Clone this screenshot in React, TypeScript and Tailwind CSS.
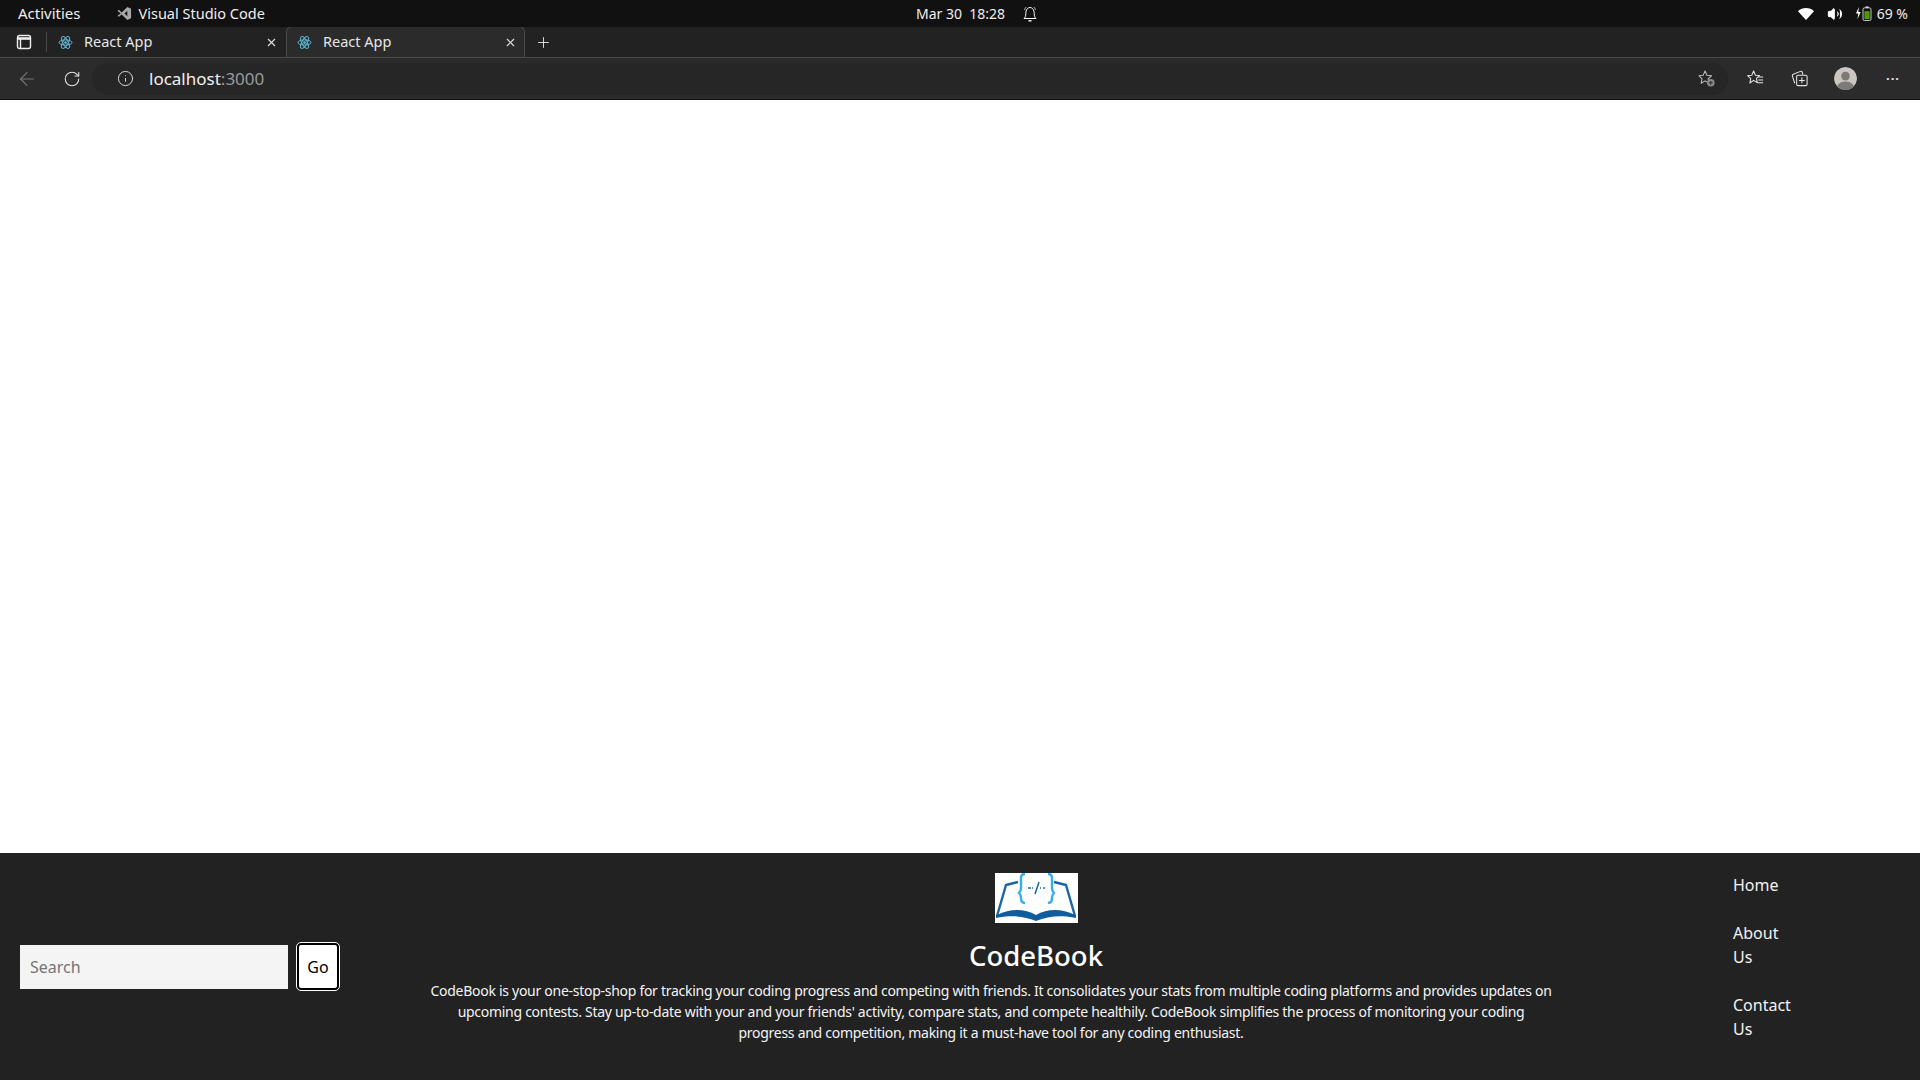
import { RotateCw, ArrowLeft, Info, X, Plus, Volume2 } from "lucide-react";

const uiFont = "font-['Noto_Sans','Open_Sans',sans-serif]";

function ReactIcon() {
  return (
    <svg viewBox="0 0 24 24" className="h-[15px] w-[15px]" fill="none" stroke="#61b8d6" strokeWidth="1.6" aria-hidden>
      <circle cx="12" cy="12" r="2.2" fill="#61b8d6" stroke="none" />
      <ellipse cx="12" cy="12" rx="10.5" ry="4.2" />
      <ellipse cx="12" cy="12" rx="10.5" ry="4.2" transform="rotate(60 12 12)" />
      <ellipse cx="12" cy="12" rx="10.5" ry="4.2" transform="rotate(120 12 12)" />
    </svg>
  );
}

function Tab({ active }: { active?: boolean }) {
  return (
    <div
      className={`flex h-[31px] w-[239px] items-center justify-between rounded-t-md border border-b-0 pl-[10px] pr-[7px] ${
        active ? "border-[#4a4a4a] bg-[#2b2b2b]" : "border-transparent"
      }`}
    >
      <div className="flex items-center gap-[11px]">
        <ReactIcon />
        <span className="text-[14.5px] text-[#e6e6e6]">React App</span>
      </div>
      <X className="h-[13px] w-[13px] text-[#e0e0e0]" strokeWidth={2} />
    </div>
  );
}

function SidebarIcon() {
  return (
    <svg viewBox="0 0 16 16" className="h-[16px] w-[16px]" fill="none" stroke="#eeeeee" strokeWidth="1.4" aria-hidden>
      <rect x="1.500" y="1.500" width="13" height="13" rx="2" />
      <path d="M1.500 4.500h13" strokeWidth="2.600" />
      <path d="M4.500 5v9" />
    </svg>
  );
}

function VsCodeIcon() {
  return (
    <svg viewBox="0 0 16 16" className="h-[15px] w-[15px]" fill="#a8a8a8" aria-hidden>
      <path d="M11 1l4 2v10l-4 2-6-6-3 2.500-1.500-1L4 8 .500 5l1.500-1L5 7zM11 5L8 8l3 3z" />
    </svg>
  );
}

function FavAddIcon() {
  return (
    <svg viewBox="0 0 20 20" className="h-[19px] w-[19px]" fill="none" aria-hidden>
      <path d="M8.500 2l2 4.600 4.800.5-3.600 3.200 1 4.700-4.200-2.500-4.200 2.500 1-4.700L2 7.100l4.500-.5z" stroke="#bdbdbd" strokeWidth="1.100" strokeLinejoin="round" />
      <circle cx="14.500" cy="14.500" r="4" fill="#8a8a8a" />
      <path d="M12.500 14.500h4M14.500 12.500v4" stroke="#2b2b2b" strokeWidth="1.100" />
    </svg>
  );
}

function FavListIcon() {
  return (
    <svg viewBox="0 0 20 20" className="h-[19px] w-[19px]" fill="none" stroke="#e6e6e6" strokeWidth="1.100" aria-hidden>
      <path d="M8 2l1.900 4.500 4.300.4-3.200 2.900.9 4.500L8 12l-3.900 2.700.9-4.500L1.800 6.900l4.300-.4z" strokeLinejoin="round" />
      <path d="M13 8.500h5M13 11.500h5M12 14.500h6" />
    </svg>
  );
}

function CollectionsIcon() {
  return (
    <svg viewBox="0 0 20 20" className="h-[19px] w-[19px]" fill="none" stroke="#e6e6e6" strokeWidth="1.100" aria-hidden>
      <path d="M5 15L2.500 7.500a1.500 1.500 0 0 1 1-1.900L11 2.500a1.500 1.500 0 0 1 1.900.9L13.500 6" />
      <rect x="7" y="6.500" width="11" height="11" rx="1.500" />
      <path d="M12.500 9v6M9.500 12h6" />
    </svg>
  );
}

function AvatarIcon() {
  return (
    <svg viewBox="0 0 24 24" className="h-[23px] w-[23px] rounded-full" aria-hidden>
      <circle cx="12" cy="12" r="12" fill="#c9c6c1" />
      <circle cx="12" cy="9.500" r="4.500" fill="#7d7b78" />
      <path d="M2.500 24c0-6 4-9 9.500-9s9.500 3 9.500 9z" fill="#7d7b78" />
    </svg>
  );
}

function WifiIcon() {
  return (
    <svg viewBox="0 0 16 12" className="h-[12px] w-[16px]" fill="#ffffff" aria-hidden>
      <path d="M8 12L0 3.200C2 1.200 4.900 0 8 0s6 1.200 8 3.200z" />
    </svg>
  );
}

function BatteryIcon() {
  return (
    <svg viewBox="0 0 18 16" className="h-[15px] w-[17px]" fill="none" aria-hidden>
      <path d="M4 1L1 8h2.500L2.500 14 6 6.500H3.500z" fill="#ffffff" />
      <rect x="8.500" y="2" width="8.500" height="13.500" rx="1.500" stroke="#e8e8e8" strokeWidth="0.900" />
      <rect x="11" y="0.500" width="3.500" height="1.500" fill="#e8e8e8" />
      <rect x="10" y="5.500" width="5.500" height="8.500" fill="#4e9a06" />
    </svg>
  );
}

function BellIcon() {
  return (
    <svg viewBox="0 0 14 16" className="h-[16px] w-[14px]" fill="none" stroke="#ffffff" strokeWidth="1" aria-hidden>
      <path d="M1 12.500c1.200-1 1.800-2.500 1.800-5C2.800 4 4.500 1.500 7 1.500s4.200 2.500 4.200 6c0 2.500.6 4 1.800 5z" strokeLinejoin="round" />
      <path d="M5.500 14.800h3" strokeWidth="1.400" />
      <path d="M1.500 4C1.800 2.800 2.400 1.800 3.200 1M12.500 4c-.3-1.200-.9-2.200-1.700-3" strokeWidth="0.700" />
    </svg>
  );
}

function LogoIcon() {
  return (
    <svg viewBox="0 0 83 50" className="block h-[50px] w-[83px] bg-white" fill="none" aria-hidden>
      <path d="M23 9L11 12 2 43c14-4 28-3 39 3 11-6 25-7 39-3L71 12 59 9" stroke="#1b65a6" strokeWidth="2.400" strokeLinejoin="round" />
      <path d="M2 42c14-7 28-6 39 0 11-6 25-7 39 0l1 3c-14-3-28-2-40 3-12-5-26-6-40-3z" fill="#0f5c9e" />
      <path d="M30 1c-3 0-4 1-4 4v10c0 3-1 4-2 5 1 1 2 2 2 5v0c0 3 1 5 4 5" stroke="#35aef0" strokeWidth="2.400" />
      <path d="M53 1c3 0 4 1 4 4v10c0 3 1 4 2 5-1 1-2 2-2 5v0c0 3-1 5-4 5" stroke="#35aef0" strokeWidth="2.400" />
      <path d="M33 15h3M37 15h1M45 15h1M48 15h2M44 9l-4 12" stroke="#1b65a6" strokeWidth="1.500" />
    </svg>
  );
}

export default function App() {
  return (
    <div className={`flex h-[1080px] w-[1920px] flex-col overflow-hidden bg-white ${uiFont}`}>
      {/* system bar */}
      <div className="relative flex h-[27px] items-center justify-between bg-[#111111] pl-[18px] pr-[12px] text-[15px] text-[#eeeeee]">
        <div className="flex items-center">
          <span>Activities</span>
          <span className="ml-[36px] flex items-center gap-[7px] text-[14.5px]">
            <VsCodeIcon />
            Visual Studio Code
          </span>
        </div>
        <div className="absolute left-[916px] top-0 flex h-[27px] items-center gap-[18px] text-[14px]">
          <span className="whitespace-pre">Mar 30  18:28</span>
          <BellIcon />
        </div>
        <div className="flex items-center gap-[11px]">
          <WifiIcon />
          <Volume2 className="ml-[2px] h-[16px] w-[16px] fill-white text-white" strokeWidth={1.500} />
          <span className="ml-[1px] flex items-center gap-[5px] text-[14px]">
            <BatteryIcon />
            69 %
          </span>
        </div>
      </div>

      {/* tab strip */}
      <div className="flex h-[31px] items-end border-b border-[#4a4a4a] bg-[#222222]">
        <div className="flex h-[31px] w-[47px] items-center justify-between pl-[16px]">
          <SidebarIcon />
          <span className="h-[20px] w-px bg-[#4a4a4a]" />
        </div>
        <Tab />
        <Tab active />
        <Plus className="mb-[6px] ml-[10px] h-[17px] w-[17px] text-[#e6e6e6]" strokeWidth={1.300} />
      </div>

      {/* address bar */}
      <div className="flex h-[42px] items-center justify-between border-b border-[#111111] bg-[#2b2b2b] pl-[16px] pr-[20px]">
        <div className="flex items-center">
          <ArrowLeft className="h-[22px] w-[22px] text-[#777777]" strokeWidth={1.200} />
          <RotateCw className="ml-[25px] h-[18px] w-[18px] text-[#e6e6e6]" strokeWidth={1.400} />
          <div className="ml-[11px] flex h-[32px] w-[1636px] items-center justify-between rounded-full bg-[#262626] pl-[25px] pr-[12px]">
            <div className="flex items-center">
              <Info className="h-[17px] w-[17px] text-[#e6e6e6]" strokeWidth={1.300} />
              <span className="ml-[15px] text-[17px] text-[#f0f0f0]">
                localhost<span className="text-[#9a9a9a]">:3000</span>
              </span>
            </div>
            <FavAddIcon />
          </div>
        </div>
        <div className="flex items-center">
          <FavListIcon />
          <span className="ml-[25px]"><CollectionsIcon /></span>
          <span className="ml-[25px]"><AvatarIcon /></span>
          <span className="ml-[29px] text-[13px] font-bold leading-none tracking-[1px] text-[#e6e6e6]">···</span>
        </div>
      </div>

      <div className="flex-1 bg-white" />

      {/* footer */}
      <footer className="flex h-[227px] items-center bg-[#222222] text-white">
        <form className="flex w-[375px] items-center pl-[20px]">
          <input
            placeholder="Search"
            className="h-[44px] w-[268px] bg-[#f4f4f4] px-[10px] text-[16px] text-black outline-none placeholder:text-[#757575]"
          />
          <button
            type="button"
            className="ml-[9px] h-[47px] w-[42px] rounded-[4px] border-2 border-black bg-white text-[16px] text-black outline outline-1 outline-white"
          >
            Go
          </button>
        </form>

        <div className="flex w-[1322px] flex-col items-center self-start pt-[20px]">
          <LogoIcon />
          <h1 className="mt-[16px] text-[27.5px] font-medium leading-[34px]">CodeBook</h1>
          <p className="-ml-[90px] mt-[7px] w-[1140px] text-center text-[14px] leading-[21px] tracking-[-0.28px] text-[#f4f4f4]">
            CodeBook is your one-stop-shop for tracking your coding progress and competing with friends. It consolidates your stats from multiple coding platforms and provides updates on
            <br />
            upcoming contests. Stay up-to-date with your and your friends' activity, compare stats, and compete healthily. CodeBook simplifies the process of monitoring your coding
            <br />
            progress and competition, making it a must-have tool for any coding enthusiast.
          </p>
        </div>

        <ul className="box-content flex w-[60px] flex-col gap-[24px] self-start pl-[36px] pt-[20px] text-[16px] leading-[24px] text-[#f2f2f2]">
          <li>Home</li>
          <li>About Us</li>
          <li>Contact Us</li>
        </ul>
      </footer>
    </div>
  );
}
